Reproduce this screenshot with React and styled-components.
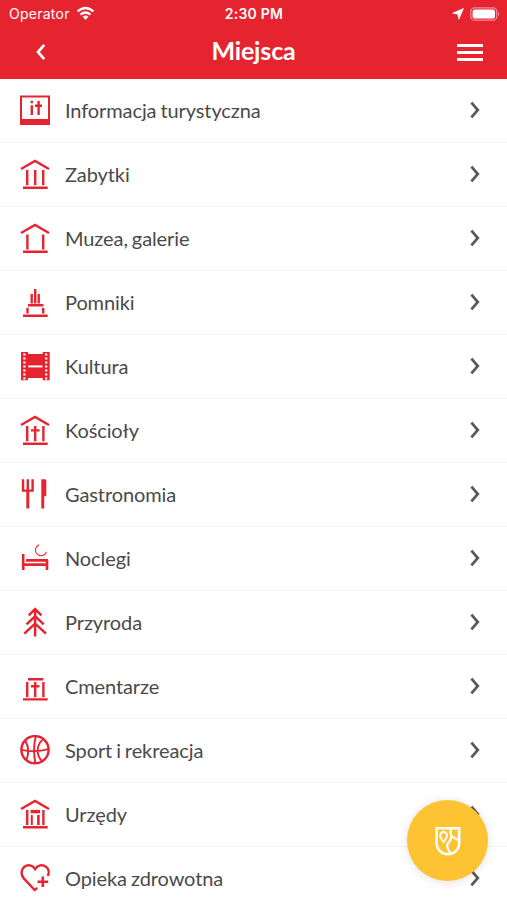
import React from "react";
import styled, { createGlobalStyle } from "styled-components";

const roof = "M2 10 L16 2 L30 10";
const base = "M4 28.7 H28.7";

const places = [
  {
    name: "Informacja turystyczna",
    icon: (
      <>
        <path d="M2 24 V1.6 H30 V24" strokeWidth="2" />
        <path d="M1 24 H31 V30 H1 Z" fill="currentColor" stroke="none" />
        <path d="M12.8 10.2 V20 M12.8 5.8 V8.2 M19.6 6 V20 M16 10.7 H23" strokeWidth="2.4" />
      </>
    ),
  },
  {
    name: "Zabytki",
    icon: <path d={`${roof} M8.2 11 V26.2 M16.2 11 V26.2 M24.2 11 V26.2 ${base}`} />,
  },
  {
    name: "Muzea, galerie",
    icon: <path d={`${roof} M8.4 11.5 V26.5 M24.2 11.5 V26.5 ${base}`} />,
  },
  {
    name: "Pomniki",
    icon: (
      <path
        d={`M16.2 2 V16.4 M12.7 7 V16.4 M19.7 7 V16.4 M9 18.2 H24.4 M8.5 20.8 V26.4 M24.2 20.8 V26.4 ${base}`}
      />
    ),
  },
  {
    name: "Kultura",
    icon: (
      <>
        <path
          d="M2 1 H9 V3 H23.7 V1 H30.7 V29.3 H23.7 V27 H9 V29.3 H2 Z"
          fill="currentColor"
          stroke="none"
        />
        <path d="M5.4 2.6 V28.6 M27.2 2.6 V28.6" stroke="#fff" strokeWidth="2.2" strokeDasharray="2 2" />
        <path d="M9.2 15.4 H23.4" stroke="#fff" strokeWidth="2" />
      </>
    ),
  },
  {
    name: "Kościoły",
    icon: <path d={`${roof} M8.2 11 V26.2 M24.4 11 V26.2 M16.2 11 V26.2 M12 15.4 H20.6 ${base}`} />,
  },
  {
    name: "Gastronomia",
    icon: (
      <>
        <path d="M4 0.3 V11.6 H13.6 V0.3 M8.8 0.3 V12" strokeWidth="2.4" />
        <path d="M8.8 11 V29.4" strokeWidth="3" />
        <path d="M22.3 0.3 H26 Q27.3 0.3 27.3 2 V17.3 H25.2 V29.4 H22.3 Z" fill="currentColor" stroke="none" />
      </>
    ),
  },
  {
    name: "Noclegi",
    icon: (
      <>
        <path d="M4.2 11 V27 M7 17.4 H29 M4 21.6 H29 M28 17 V27" strokeWidth="2.6" />
        <path d="M20.2 1.8 A5.6 5.6 0 1 0 27.4 8.8" strokeWidth="1.1" />
      </>
    ),
  },
  {
    name: "Przyroda",
    icon: (
      <path
        d="M16.1 1.5 V29.4 M9.8 8.4 L16.1 2 L22.4 8.4 M7.5 17.3 L16.1 9.2 L24.7 17.3 M5.3 26.6 L16.1 16.6 L27 26.6"
        strokeWidth="2.5"
      />
    ),
  },
  {
    name: "Cmentarze",
    icon: <path d="M9 8.2 H24.4 M8.2 11 V26.2 M24.4 11 V26.2 M16.2 11 V26.2 M12 15.2 H20.4 M4 28.4 H28.7" />,
  },
  {
    name: "Sport i rekreacja",
    icon: (
      <>
        <circle cx="16" cy="14.7" r="13.6" />
        <path
          d="M2.4 14.8 Q16 18 29.6 14.2 M16.8 1.2 Q13.6 14 16.4 28.2 M6.2 5.6 Q11.6 14.6 7.4 24.8 M24.6 4.2 C17 9 17 20 23 26.2"
          strokeWidth="1.9"
        />
      </>
    ),
  },
  {
    name: "Urzędy",
    icon: (
      <>
        <path d={`${roof} M8.2 11 V26 M24.4 11 V26 M4 28.3 H28.7`} />
        <path d="M11.6 12.6 H21" strokeWidth="3.4" />
        <path d="M12.8 16 V26" strokeWidth="2" />
        <path d="M19.4 16 V26" strokeWidth="2.6" />
      </>
    ),
  },
  {
    name: "Opieka zdrowotna",
    icon: (
      <>
        <path
          d="M18.4 25 L15.6 27 L4.8 15.4 C1.6 11.8 2 6.4 5.4 3.8 C8.8 1.2 13.4 2 16.1 6 C18.8 2 23.6 1.2 27 3.8 C29.8 6 30.4 9.8 28.8 13"
          strokeWidth="2.4"
        />
        <path d="M23.8 13.4 V24 M18.5 18.7 H29.2" strokeWidth="2.6" />
      </>
    ),
  },
];

const App = () => {
  const placeList = places.map((place) => (
    <PlaceRow key={place.name}>
      <PlaceIcon viewBox="0 0 32 32">{place.icon}</PlaceIcon>
      <PlaceName>{place.name}</PlaceName>
      <Arrow viewBox="0 0 12 18">
        <path d="M2.4 1.6 L8.8 9 L2.4 16.4" />
      </Arrow>
    </PlaceRow>
  ));

  return (
    <Screen>
      <GlobalStyle />
      <Header>
        <StatusBar>
          <Carrier>
            Operator
            <WifiIcon viewBox="0 0 20 15">
              <path d="M1.6 5.4 Q10 -2 18.4 5.4" />
              <path d="M4.7 8.7 Q10 4.2 15.3 8.7" />
              <path d="M6.9 10.9 Q10 8.3 13.1 10.9 L10 14.3 Z" fill="#fff" stroke="none" />
            </WifiIcon>
          </Carrier>
          <Clock>2:30 PM</Clock>
          <StatusIcons>
            <LocationIcon viewBox="0 0 12 12">
              <path d="M11.4 0.6 L6.8 11.2 L5.9 6.1 L0.8 5.2 Z" />
            </LocationIcon>
            <BatteryIcon viewBox="0 0 31 14">
              <rect x="0.8" y="0.8" width="26" height="12.4" rx="3.6" fill="none" stroke="#f28d94" strokeWidth="1.2" />
              <rect x="2.6" y="2.5" width="22.4" height="9" rx="2" fill="#fff" />
              <path d="M28.2 4.8 Q30.4 7 28.2 9.2 Z" fill="#f28d94" />
            </BatteryIcon>
          </StatusIcons>
        </StatusBar>
        <NavBar>
          <BackButton aria-label="Wstecz">
            <svg width="10" height="18" viewBox="0 0 10 18">
              <path d="M8.2 1.8 L2 9 L8.2 16.2" fill="none" stroke="#fff" strokeWidth="2.7" />
            </svg>
          </BackButton>
          <Title>Miejsca</Title>
          <MenuButton aria-label="Menu">
            <MenuLine />
            <MenuLine />
            <MenuLine />
          </MenuButton>
        </NavBar>
      </Header>
      <PlaceList>{placeList}</PlaceList>
      <MapButton aria-label="Mapa">
        <svg width="28" height="32" viewBox="0 0 28 32">
          <g fill="none" stroke="#fff" strokeWidth="2.3">
            <path d="M2.6 3.2 H25.2 V17.6 C25.2 25 20 29.2 13.9 29.2 C7.8 29.2 2.6 25 2.6 17.6 Z" strokeWidth="2.6" />
            <path d="M9.6 17 C7.2 13.6 6.2 12.2 6.2 10.4 A3.4 3.4 0 0 1 13 10.4 C13 12.2 12 13.6 9.6 17 Z" strokeWidth="1.9" />
            <path d="M17.4 3.4 Q15.4 7.6 17.8 11.4 L25 15.4 M17.8 11.4 Q16.6 16 13.2 19.4 Q12.8 24 17 28.6" />
          </g>
        </svg>
      </MapButton>
    </Screen>
  );
};

export default App;

const GlobalStyle = createGlobalStyle`
  * {
    box-sizing: border-box;
  }

  body {
    margin: 0;
    background: #fff;
    font-family: Lato, "Open Sans", sans-serif;
  }

  button {
    padding: 0;
    border: 0;
    background: none;
  }
`;

const Screen = styled.div`
  position: relative;
  height: 900px;
  overflow: hidden;
  background: #fff;
`;

const Header = styled.header`
  height: 79px;
  color: #fff;
  background: #e62430;
`;

const StatusBar = styled.div`
  display: grid;
  grid-template-columns: 1fr auto 1fr;
  align-items: center;
  height: 27px;
  padding: 0 6px 0 9px;
  font-family: Inter, sans-serif;
  font-size: 14px;
  letter-spacing: 0.25px;
`;

const Carrier = styled.div`
  display: flex;
  align-items: center;
  gap: 6px;
`;

const WifiIcon = styled.svg`
  width: 19px;
  height: 15px;
  fill: none;
  stroke: #fff;
  stroke-width: 2.4;
`;

const Clock = styled.span`
  margin-right: 2px;
  font-weight: 600;
`;

const StatusIcons = styled.div`
  display: flex;
  align-items: center;
  justify-content: flex-end;
  gap: 6px;
`;

const LocationIcon = styled.svg`
  width: 12px;
  height: 12px;
  fill: #fff;
  stroke: #fff;
  stroke-width: 0.8;
  stroke-linejoin: round;
`;

const BatteryIcon = styled.svg`
  width: 31px;
  height: 14px;
`;

const NavBar = styled.div`
  display: grid;
  grid-template-columns: 60px 1fr 60px;
  align-items: center;
  height: 49px;
  padding: 0 7px;
`;

const BackButton = styled.button`
  display: flex;
  justify-content: center;
  padding-left: 7px;
`;

const Title = styled.h1`
  margin: 0 0 3px;
  font-size: 25px;
  line-height: 30px;
  letter-spacing: -0.15px;
  font-weight: 700;
  text-align: center;
`;

const MenuButton = styled.button`
  display: flex;
  flex-direction: column;
  gap: 4px;
  justify-self: center;
  width: 26px;
  margin-top: 1px;
`;

const MenuLine = styled.span`
  height: 3px;
  background: #fff;
`;

const PlaceList = styled.ul`
  margin: 0;
  padding: 0;
  list-style: none;
`;

const PlaceRow = styled.li`
  display: flex;
  align-items: center;
  height: 63.97px;
  padding: 0 26px 0 19px;
  border-bottom: 1px solid #f4f4f5;
`;

const PlaceIcon = styled.svg`
  width: 32px;
  height: 32px;
  margin-top: 1px;
  margin-right: 14px;
  color: #e62430;
  fill: none;
  stroke: currentColor;
  stroke-width: 2.4;
`;

const PlaceName = styled.span`
  flex: 1;
  margin-bottom: 1px;
  font-size: 20px;
  line-height: 24px;
  letter-spacing: -0.1px;
  word-spacing: -1px;
  color: #4a4a4b;
`;

const Arrow = styled.svg`
  width: 12px;
  height: 18px;
  fill: none;
  stroke: #58585a;
  stroke-width: 2.7;
`;

const MapButton = styled.button`
  position: absolute;
  right: 19px;
  bottom: 19px;
  display: flex;
  align-items: center;
  justify-content: center;
  width: 81px;
  height: 81px;
  border-radius: 50%;
  background: #fdc332;
  box-shadow: 0 1px 10px rgba(0, 0, 0, 0.12);
`;
